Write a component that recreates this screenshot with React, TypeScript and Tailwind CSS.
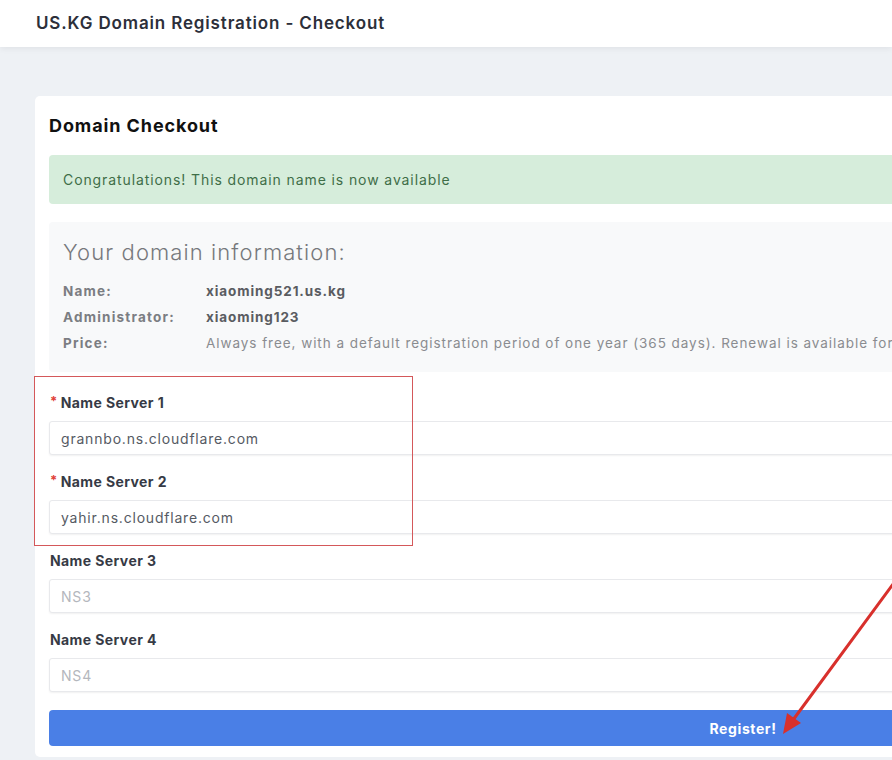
import type { ReactNode } from "react";

const font = { fontFamily: "Inter, 'Noto Sans', sans-serif" };

function Field({
  label,
  required,
  value,
  placeholder,
}: {
  label: string;
  required?: boolean;
  value?: string;
  placeholder?: string;
}) {
  return (
    <div className="mb-4">
      <div className="mb-[9px] flex h-5 items-center pl-[1px] text-[14px] font-bold tracking-[0.4px] text-[#363a45]">
        {required && <span className="mr-[3px] text-[13px] text-[#e0413a]">*</span>}
        {label}
      </div>
      <div className="flex h-[34px] items-center rounded-[3px] border border-[#e8e9ec] bg-white px-[11px] text-[14px] tracking-[0.8px] shadow-[0_1px_2px_rgba(0,0,0,0.06)]">
        {value ? (
          <span className="text-[#555a63]">{value}</span>
        ) : (
          <span className="text-[#b4b7bd]">{placeholder}</span>
        )}
      </div>
    </div>
  );
}

function InfoRow({ label, children }: { label: string; children: ReactNode }) {
  return (
    <div className="flex h-[26px] items-center text-[13.5px]">
      <div className="w-[143px] shrink-0 font-bold tracking-[1.2px] text-[#7b7d82]">{label}</div>
      <div className="whitespace-nowrap">{children}</div>
    </div>
  );
}

export default function App() {
  return (
    <div
      className="relative h-[760px] w-[892px] overflow-hidden bg-[#eef1f5]"
      style={font}
    >
      <header className="flex h-[47px] items-center bg-white pl-9 shadow-[0_2px_6px_rgba(0,0,0,0.06)]">
        <h1 className="pt-[1px] text-[17px] font-semibold tracking-[0.85px] text-[#2c2f3a]">
          US.KG Domain Registration - Checkout
        </h1>
      </header>

      <div className="ml-[35px] mt-[49px] w-[1416px] rounded-[5px] bg-white px-[14px] pb-[11px] pt-[18px]">
        <h2 className="mb-[17px] h-6 text-[18px] leading-6 font-bold tracking-[0.9px] text-[#111]">
          Domain Checkout
        </h2>

        <div className="mb-[18px] flex h-[49px] items-center rounded-[4px] bg-[#d6eddb] px-[14px] text-[14px] tracking-[0.9px] text-[#3f6e48]">
          Congratulations! This domain name is now available
        </div>

        <div className="mb-5 rounded-[4px] bg-[#f8f9fa] px-[14px] pb-[16px] pt-[15px]">
          <div className="mb-[11px] h-[30px] text-[22px] leading-[30px] font-light tracking-[1.1px] text-[#76787c]">
            Your domain information:
          </div>
          <InfoRow label="Name:">
            <span className="font-bold tracking-[0.9px] text-[#5a5c61]">xiaoming521.us.kg</span>
          </InfoRow>
          <InfoRow label="Administrator:">
            <span className="font-bold tracking-[0.9px] text-[#5a5c61]">xiaoming123</span>
          </InfoRow>
          <InfoRow label="Price:">
            <span className="tracking-[0.95px] text-[#8a8c90]">
              Always free, with a default registration period of one year (365 days). Renewal is available for
            </span>
          </InfoRow>
        </div>

        <Field label="Name Server 1" required value="grannbo.ns.cloudflare.com" />
        <Field label="Name Server 2" required value="yahir.ns.cloudflare.com" />
        <Field label="Name Server 3" placeholder="NS3" />
        <Field label="Name Server 4" placeholder="NS4" />

        <button className="mt-[18px] flex h-9 w-full items-center justify-center rounded-[4px] bg-[#4a7fe6] text-[14px] font-bold tracking-[0.6px] text-white">
          Register!
        </button>
      </div>

      {/* annotation overlays */}
      <div className="pointer-events-none absolute left-[34px] top-[376px] h-[170px] w-[379px] border-[1.5px] border-[#d4585a]" />
      <svg
        className="pointer-events-none absolute left-0 top-0"
        width="892"
        height="760"
        viewBox="0 0 892 760"
      >
        <line x1="896" y1="580" x2="793" y2="720" stroke="#d8302c" strokeWidth="3" strokeLinecap="round" />
        <polygon points="783,734 787,713 801,723" fill="#d8302c" />
      </svg>
    </div>
  );
}
